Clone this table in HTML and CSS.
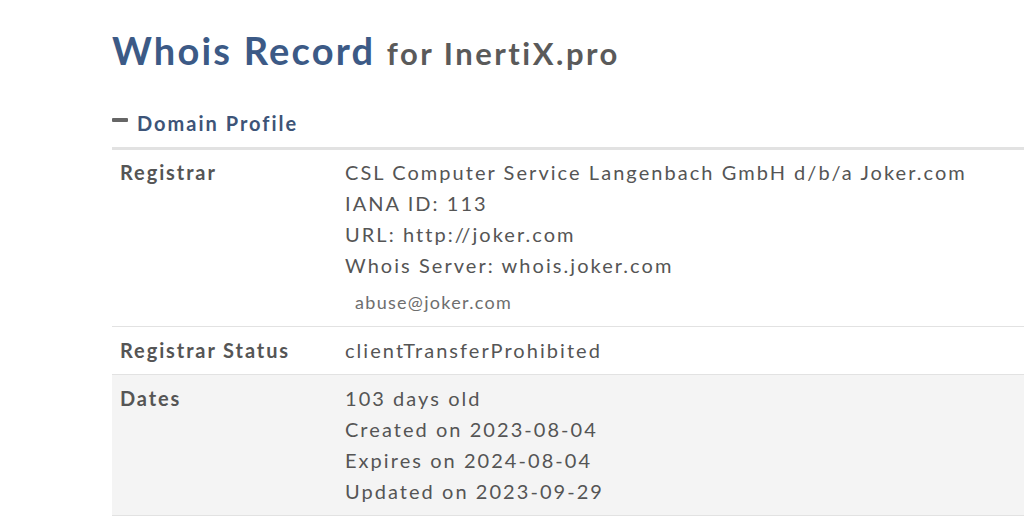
FILE: index.html
```html
<!DOCTYPE html>
<html lang="en">
<head>
<meta charset="utf-8">
<title>Whois Record for InertiX.pro</title>
<link rel="stylesheet" href="styles.css">
</head>
<body>
<main class="page">
  <h1 class="title">Whois Record <span class="title-sub">for InertiX.pro</span></h1>
  <h2 class="section-head"><span class="minus"></span>Domain Profile</h2>
  <div class="profile">
    <div class="row first">
      <div class="label">Registrar</div>
      <div class="value">
        <div>CSL Computer Service Langenbach GmbH d/b/a Joker.com</div>
        <div>IANA ID: 113</div>
        <div>URL: http://joker.com</div>
        <div>Whois Server: whois.joker.com</div>
        <div class="email">abuse@joker.com</div>
      </div>
    </div>
    <div class="row">
      <div class="label">Registrar Status</div>
      <div class="value"><div>clientTransferProhibited</div></div>
    </div>
    <div class="row alt">
      <div class="label">Dates</div>
      <div class="value">
        <div>103 days old</div>
        <div>Created on 2023-08-04</div>
        <div>Expires on 2024-08-04</div>
        <div>Updated on 2023-09-29</div>
      </div>
    </div>
  </div>
</main>
</body>
</html>
```
FILE: styles.css
```css
html, body {
  margin: 0;
  padding: 0;
  background: #fff;
  overflow: hidden;
}
body {
  font-family: Lato, "Open Sans", sans-serif;
  color: #555;
  font-variant-ligatures: none;
}
.page {
  padding: 22px 0 0 112px;
  width: 1100px;
}
.title {
  margin: 0;
  font-size: 38px;
  font-weight: 700;
  color: #3c5a86;
  line-height: 56px;
  letter-spacing: 2.2px;
}
.title-sub {
  font-size: 31px;
  color: #5a5a5a;
  letter-spacing: 2.5px;
}
.section-head {
  margin: 29px 0 0 0;
  display: flex;
  align-items: center;
  font-size: 20px;
  font-weight: 700;
  color: #3d5478;
  line-height: 26px;
  letter-spacing: 2px;
}
.minus {
  display: inline-block;
  width: 16px;
  height: 4px;
  background: #666;
  border-radius: 1px;
  margin-right: 9px;
  margin-top: -6px;
}
.profile {
  margin-top: 11px;
  border-top: 3px solid #e2e2e2;
}
.row {
  display: grid;
  grid-template-columns: 233px 1fr;
  padding: 8px 0;
  border-bottom: 1px solid #e2e2e2;
  font-size: 20px;
  line-height: 31px;
  letter-spacing: 2.05px;
}
.row.first {
  padding-top: 7px;
}
.row.alt {
  background: #f4f4f4;
}
.label {
  padding-left: 8px;
  font-weight: 700;
  color: #555;
  letter-spacing: 1.9px;
}
.value {
  color: #555;
}
.email {
  font-size: 18px;
  color: #6e6e6e;
  letter-spacing: 1.3px;
  padding: 6px 0 1px 10px;
  line-height: 30px;
}
```
